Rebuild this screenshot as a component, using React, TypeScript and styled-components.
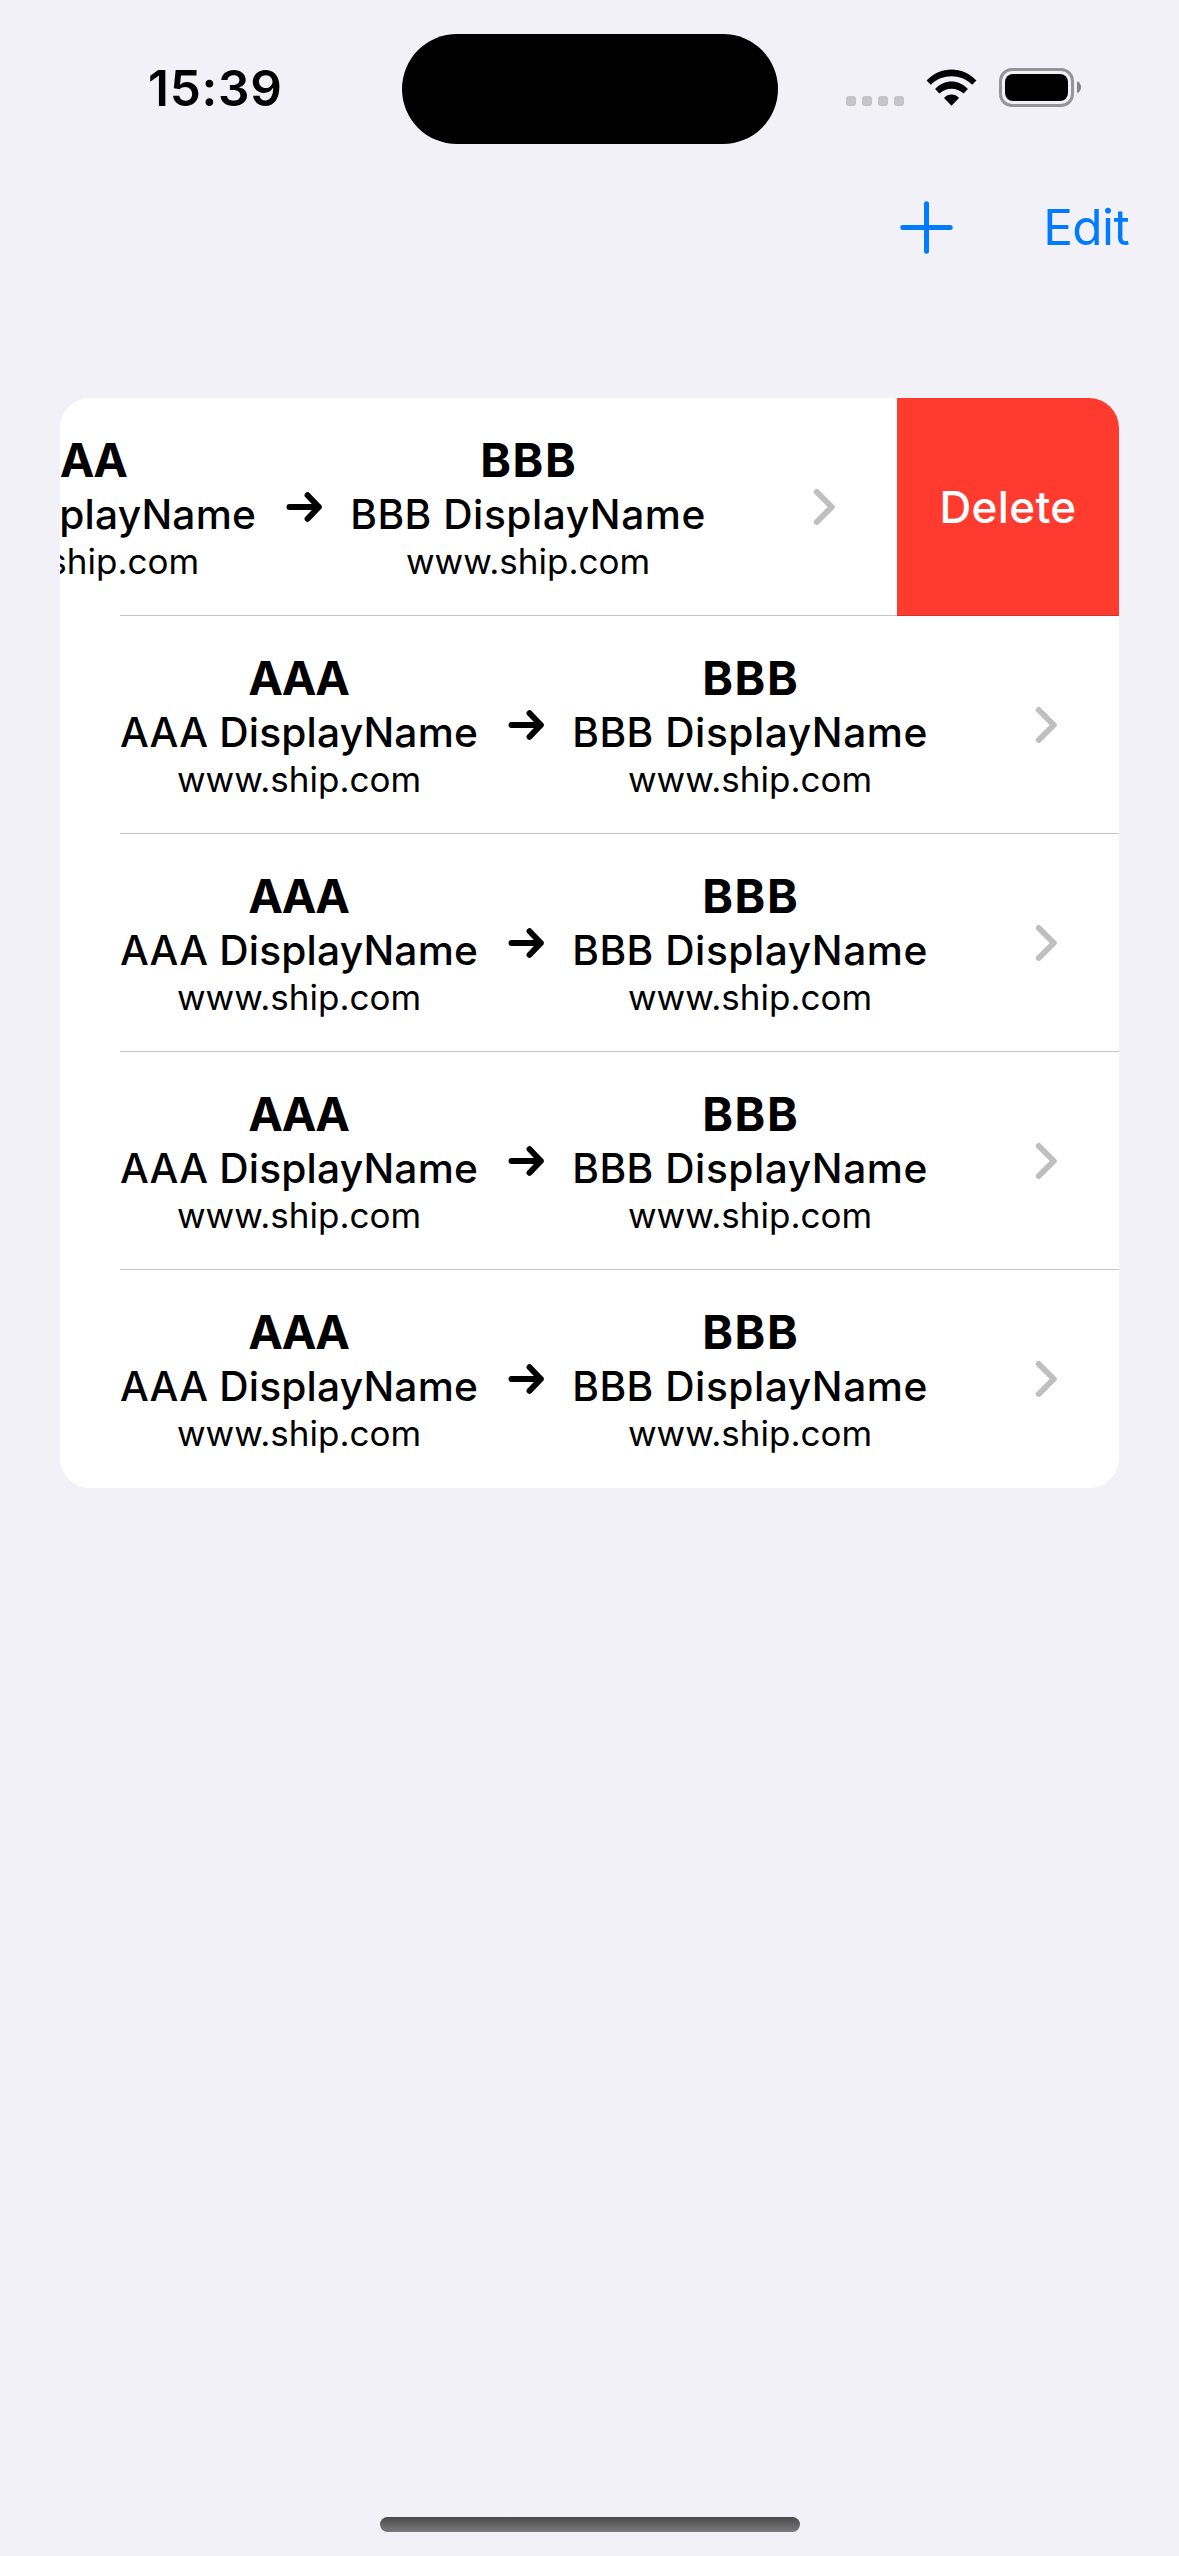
import React from "react";
import styled, { createGlobalStyle } from "styled-components";

const GlobalStyle = createGlobalStyle`
  html, body {
    margin: 0;
    padding: 0;
    background: #f2f1f7;
  }
  *, *::before, *::after { box-sizing: border-box; }
`;

const Screen = styled.div`
  display: flex;
  flex-direction: column;
  width: 1179px;
  height: 2556px;
  overflow: hidden;
  background: #f2f1f7;
  color: #000;
  font-family: Inter, "Liberation Sans", sans-serif;
`;

const StatusBar = styled.header`
  display: grid;
  grid-template-columns: 401.5px 376px 1fr;
  height: 177px;
  padding-top: 34px;
  align-items: start;
`;

const Clock = styled.time`
  padding: 24px 0 0 148px;
  font-size: 49.5px;
  font-weight: 600;
  line-height: 60px;
  letter-spacing: 0.75px;
`;

const Island = styled.div`
  height: 110px;
  border-radius: 55px;
  background: #000;
`;

const StatusIcons = styled.div`
  display: flex;
  align-items: flex-end;
  padding: 34px 0 0 68.5px;
`;

const SignalDots = styled.div`
  display: flex;
  gap: 6px;
  margin: 0 22px 1px 0;
`;

const SignalDot = styled.i`
  width: 10px;
  height: 10px;
  border-radius: 3px;
  background: #c5c4c9;
`;

const NavBar = styled.nav`
  display: flex;
  align-items: center;
  justify-content: flex-end;
  height: 100px;
  padding-right: 50px;
  color: #007aff;
`;

const NavButton = styled.button<{ $gap?: number }>`
  display: flex;
  margin: 0 ${(p) => p.$gap ?? 0}px 0 0;
  padding: 0;
  border: 0;
  background: none;
  color: inherit;
  font: 400 49.5px/60px Inter, "Liberation Sans", sans-serif;
  letter-spacing: -0.6px;
`;

const List = styled.ul`
  width: 1059px;
  margin: 121px 0 0 60px;
  padding: 0;
  list-style: none;
  border-radius: 30px;
  overflow: hidden;
  background: #fff;
`;

const Row = styled.li`
  display: flex;
  position: relative;
  height: 218px;
  overflow: hidden;

  &:not(:last-child)::after {
    content: "";
    position: absolute;
    left: 60px;
    right: 0;
    bottom: 0;
    height: 1px;
    background: rgba(60, 60, 67, 0.29);
  }
`;

const RowContent = styled.div<{ $swiped: boolean }>`
  display: grid;
  grid-template-columns: 358px 93px 358px 1fr;
  flex: none;
  width: 1059px;
  margin-left: ${(p) => (p.$swiped ? -222 : 0)}px;
  padding: 0 60px;
`;

const Party = styled.div`
  display: flex;
  flex-direction: column;
  align-items: center;
  padding-top: 34px;
  white-space: nowrap;
`;

const Code = styled.strong<{ $tracking: number }>`
  margin-right: ${(p) => -p.$tracking}px;
  font-size: 46.5px;
  font-weight: 700;
  line-height: 57px;
  letter-spacing: ${(p) => p.$tracking}px;
`;

const DisplayName = styled.span<{ $tracking: number }>`
  font-size: 40.7px;
  font-weight: 500;
  line-height: 51px;
  letter-spacing: ${(p) => p.$tracking}px;
`;

const Site = styled.span`
  font-size: 35px;
  line-height: 43px;
`;

const ArrowCell = styled.div`
  display: flex;
  align-items: center;
  justify-content: center;
`;

const ChevronCell = styled.div`
  display: flex;
  align-items: center;
  justify-content: flex-end;
`;

const DeleteButton = styled.button`
  flex: none;
  width: 222px;
  padding: 0;
  border: 0;
  background: #ff3b2f;
  color: #fff;
  font: 500 44px/54px Inter, "Liberation Sans", sans-serif;
  letter-spacing: 0.35px;
`;

const HomeIndicator = styled.div`
  width: 420px;
  height: 15px;
  margin: auto auto 24px 380px;
  border-radius: 8px;
  background: linear-gradient(#4a4a4a, #7b7b7d);
`;

const Wifi = styled.svg`
  margin-bottom: 1px;
`;

const Battery = styled.svg`
  margin-left: 21.5px;
`;

const WifiIcon = () => (
  <Wifi width="51" height="37" viewBox="0 0 51 37">
    <path d="M0.6 11.4C14.2-3.3 36.8-3.3 50.4 11.4L46.2 15.7C34.6 4.4 16.4 4.4 4.8 15.7Z" />
    <path d="M9.1 20C18.2 10 32.8 10 41.9 20L37.6 24.4C30.6 18.1 20.4 18.1 13.4 24.4Z" />
    <path d="M18 28.9C22 24.3 29 24.3 33 28.9L25.5 36.8Z" />
  </Wifi>
);

const BatteryIcon = () => (
  <Battery width="83" height="39" viewBox="0 0 83 39">
    <rect x="1.5" y="1.5" width="72" height="36" rx="11.5" fill="none" stroke="#959498" strokeWidth="3" />
    <rect x="6" y="6" width="63" height="27" rx="8" />
    <path d="M78 13.2C83.4 15.2 83.4 23.2 78 25.2Z" fill="#848387" />
  </Battery>
);

const PlusIcon = () => (
  <svg width="53" height="53" viewBox="0 0 53 53" fill="none" stroke="#007aff" strokeWidth="5" strokeLinecap="round">
    <path d="M26.5 2.8V50.2M2.8 26.5H50.2" />
  </svg>
);

const ArrowIcon = () => (
  <svg width="40" height="34" viewBox="0 0 40 34" fill="none" stroke="#000" strokeWidth="6" strokeLinecap="round" strokeLinejoin="round">
    <path d="M6.5 17H35.8M24.6 5.2L35.8 17L24.6 28.8" />
  </svg>
);

const ChevronIcon = () => (
  <svg width="24" height="38" viewBox="0 0 24 38" fill="none" stroke="#bfbfbf" strokeWidth="6" strokeLinecap="round" strokeLinejoin="round">
    <path d="M3.8 4L18.8 19L3.8 34" />
  </svg>
);

const routes = [1, 2, 3, 4, 5];

export default function App() {
  return (
    <>
      <GlobalStyle />
      <Screen>
        <StatusBar>
          <Clock>15:39</Clock>
          <Island />
          <StatusIcons>
            <SignalDots>
              <SignalDot />
              <SignalDot />
              <SignalDot />
              <SignalDot />
            </SignalDots>
            <WifiIcon />
            <BatteryIcon />
          </StatusIcons>
        </StatusBar>
        <NavBar>
          <NavButton $gap={90} aria-label="Add">
            <PlusIcon />
          </NavButton>
          <NavButton>Edit</NavButton>
        </NavBar>
        <List>
          {routes.map((id, index) => (
            <Row key={id}>
              <RowContent $swiped={index === 0}>
                <Party>
                  <Code $tracking={-1.9}>AAA</Code>
                  <DisplayName $tracking={0.17}>AAA DisplayName</DisplayName>
                  <Site>www.ship.com</Site>
                </Party>
                <ArrowCell>
                  <ArrowIcon />
                </ArrowCell>
                <Party>
                  <Code $tracking={1.7}>BBB</Code>
                  <DisplayName $tracking={0.52}>BBB DisplayName</DisplayName>
                  <Site>www.ship.com</Site>
                </Party>
                <ChevronCell>
                  <ChevronIcon />
                </ChevronCell>
              </RowContent>
              {index === 0 && <DeleteButton>Delete</DeleteButton>}
            </Row>
          ))}
        </List>
        <HomeIndicator />
      </Screen>
    </>
  );
}
